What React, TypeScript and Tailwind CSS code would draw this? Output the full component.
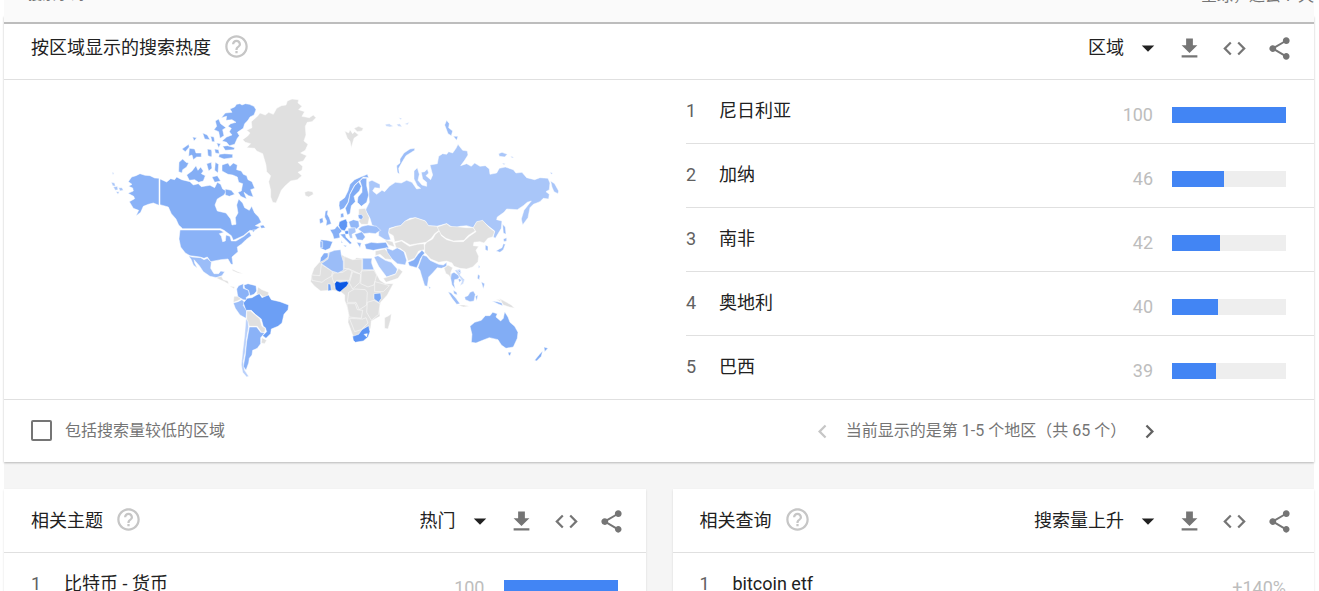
import { useState } from 'react';
import {
  MdArrowDropDown,
  MdChevronLeft,
  MdChevronRight,
  MdCode,
  MdGetApp,
  MdHelpOutline,
  MdShare,
} from 'react-icons/md';

interface Region {
  name: string;
  value: number;
}

interface Sheet {
  transform: string;
  shapes: [string, string][];
}

const regions: Region[] = [
  { name: '尼日利亚', value: 100 },
  { name: '加纳', value: 46 },
  { name: '南非', value: 42 },
  { name: '奥地利', value: 40 },
  { name: '巴西', value: 39 },
];

const NONE = '#e0e0e0';

// Map is split in four sheets, each one is a list of [fill, path]
const sheets: Sheet[] = [
  {
    // Alaska, Canada, Greenland
    transform: 'translate(100 85) scale(0.3333)',
    shapes: [
      ['#8ab2f7', 'M85 290L95 276L108 272L120 266L135 271L150 272L164 279L177 280V361L160 354L145 358L130 364L122 382L108 393L116 376L100 370L88 350L104 341L101 334L84 325L100 318L98 309L86 304L96 298Z'],
      ['#a9c6f9', 'M34 292L44 294L46 304L38 302ZM40 306L52 304L54 314L46 316ZM56 308L66 308L70 316L60 318ZM48 320L58 320L54 328ZM36 262L42 264L39 269Z'],
      ['#84aef5', 'M180 282L200 291L212 281L224 284L230 276L245 284L270 290L280 300L295 296L304 305L330 301L344 308L352 292L362 298L368 312L380 318L372 330L352 342L345 360L352 378L378 384L392 402L396 420L408 418L406 398L414 384L410 360L416 342L428 354L434 368L448 376L455 364L464 384L476 396L484 412L466 422L480 426L462 438L450 436L430 452L400 466L394 452L372 436L362 431H248L236 420L228 402L214 386L205 366L180 359Z'],
      ['#84aef5', 'M237 232L248 222L258 232L266 234L260 246L248 254L246 264L236 260Z'],
      ['#84aef5', 'M260 270L276 258L288 242L294 256L302 246L310 258L304 266L316 272L310 288L296 292L284 284L268 286Z'],
      ['#84aef5', 'M366 240L384 234L390 244L400 234L412 240L410 254L424 258L430 268L440 272L444 284L456 290L464 310L452 314L460 336L446 332L432 322L440 342L422 334L414 322L424 318L428 296L416 292L412 276L398 270L384 268L366 258Z'],
      ['#84aef5', 'M320 236L334 232L336 250L326 258ZM346 232L356 238L354 264L344 256ZM336 276L352 272L362 288L344 292ZM376 312L394 316L404 328L388 334L376 330ZM326 206L336 196L336 216ZM358 208L374 206L398 208L398 218L372 222L356 216Z'],
      ['#84aef5', 'M468 74L462 64L448 58L436 56L426 60L420 56L410 58L404 66L390 72L396 82L376 84L364 98L380 94L378 106L396 104L408 112L392 116L384 124L394 130L388 140L396 150L380 156L366 168L380 172L388 182L404 178L412 160L418 152L412 142L430 130L434 116L444 106L450 96L462 90Z'],
      ['#84aef5', 'M346 108L356 102L362 116L378 128L368 134L372 152L360 160L356 140L342 134L350 124ZM350 174L362 176L356 188ZM368 184L382 182L404 188L402 194L376 196Z'],
      ['#84aef5', 'M308 144L322 150L330 164L314 162ZM332 154L342 156L344 170L336 170ZM278 156L290 158L282 168ZM246 192L266 178L268 186L256 200ZM268 190L284 192L288 204L304 204L304 216L290 216L280 224L276 210L266 214ZM322 192L334 194L334 216L324 212ZM344 192L356 194L358 206L346 204Z'],
      [NONE, 'M428 164L444 152L450 144L440 136L456 128L454 110L474 92L480 84L496 90L506 82L520 88L530 70L544 62L558 60L562 48L576 42L596 44L594 54L606 64L596 74L614 80L606 94L628 98L640 90L648 98L636 110L622 112L616 124L618 150L612 168L624 178L616 196L602 204L620 212L610 228L594 232L608 244L606 256L594 262L606 272L592 284L572 288L556 302L544 316L536 336L528 354L518 352L512 336L512 316L506 290L512 272L500 260L498 240L488 206L470 198L464 190L440 188L452 176L436 172Z'],
      [NONE, 'M614 322L624 318L638 320L640 328L626 336L616 332Z'],
    ],
  },
  {
    // Northern Europe and Russia
    transform: 'translate(300 85) scale(0.3333)',
    shapes: [
      [NONE, 'M134 138L146 144L150 134L158 146L164 140L176 150L162 160L158 174L154 188L150 168L142 160ZM162 130L176 124L190 130L186 138L172 140Z'],
      ['#a9c6f9', 'M207 310L206 290L216 286L240 298L240 310L224 308L218 318L230 328L246 316L254 320L268 304L286 292L304 294L320 286L336 292L350 312L362 310L352 302L342 282L342 258L352 248L358 268L354 286L366 300L380 304L380 292L368 282L364 262L374 260L382 252L386 264L378 272L392 284L398 270L390 240L412 236L416 214L428 206L440 208L446 200L458 204L468 190L474 178L488 196L502 198L504 210L494 226L482 242L500 236L514 244L524 234L540 244L556 242L568 252L570 268L590 264L598 250L616 246L640 254L648 264L666 262L680 278L704 284L720 278L744 280L750 294L748 314L738 320L748 328L746 342L730 340L720 350L700 358L690 368L684 398L668 420L664 402L672 376L694 348L682 352L670 362L652 374L620 372L612 382L592 396L590 404L606 408L604 430L586 460L580 456L584 438L566 424L548 408L530 412L520 428L500 422L480 424L462 430L440 416L410 424L384 422L376 408L346 398L330 400L316 408L302 422L290 424L268 430L266 446L272 464L258 466L236 452L236 432L216 420L210 400L196 376L208 352L206 330Z'],
      ['#a9c6f9', 'M752 288L764 296L776 318L774 326L762 320L756 306ZM750 262L758 264L754 268ZM596 206L606 202L622 208L614 216L598 214ZM632 214L642 217L636 219ZM606 234L616 236L612 239Z'],
      ['#9bbdf8', 'M344 190L330 192L312 204L300 222L300 234L290 242L292 262L298 268L296 250L306 232L318 212L344 196Z'],
      ['#9bbdf8', 'M434 120L440 106L448 116L446 128L458 138L454 152L444 146L438 130ZM460 154L474 154L470 166Z'],
      ['#c9dbfb', 'M256 118L268 116L280 124L270 126L258 124ZM290 118L300 116L306 126L294 124ZM296 98L306 100L302 104ZM314 116L328 112L322 120Z'],
      ['#86aff6', 'M117 362L118 350L134 338L144 318L150 298L164 284L182 276L202 268L206 278L190 276L178 288L164 300L150 326L144 352L132 370L120 376Z'],
      ['#7fabf5', 'M136 370L146 350L150 328L164 302L176 290L184 304L178 318L162 334L166 350L154 362L150 386L142 390Z'],
      ['#86aff6', 'M180 288L188 280L200 280L200 302L206 330L200 352L184 364L172 352L174 336L186 322L186 306Z'],
      ['#86aff6', 'M76 378L84 376L82 388L88 398L94 416L78 422L80 408L74 396ZM58 402L68 398L70 412L60 416ZM122 386L130 384L132 396L122 398Z'],
      [NONE, 'M176 372L196 370L200 382L208 398L204 418L184 418L176 408L184 398L176 390Z'],
      ['#86aff6', 'M174 390L184 388L190 396L184 404L176 400Z'],
      ['#5e95f4', 'M118 410L128 406L138 402L142 412L142 424L134 438L122 434L116 422Z'],
      ['#90b6f7', 'M146 410L160 404L176 408L178 424L170 432L152 428Z'],
    ],
  },
  {
    // United States and Latin America
    transform: 'translate(100 215) scale(0.3333)',
    shapes: [
      ['#8ab2f7', 'M240 45H360L372 52L358 56L364 64L368 80L376 78L378 60L390 64L394 78L408 78L432 64L448 50L454 62L438 74L424 88L412 96L414 110L396 126L399 148L393 148L384 132L362 134L342 138L332 140L322 126L312 130L300 126L270 122L256 114L242 96L237 72Z'],
      ['#84aef5', 'M480 32L490 30L496 38L484 40ZM456 46L466 44L460 52Z'],
      ['#9bbdf8', 'M266 122L276 126L302 128L312 134L322 130L334 142L332 160L342 176L356 176L362 168L374 170L366 182L350 188L330 184L310 170L298 152L282 134L284 144L292 160L280 150L274 134Z'],
      [NONE, 'M348 188L364 184L370 194L384 198L386 208L374 200L360 194ZM388 212L404 216L402 221ZM396 162L414 170L430 176L414 174L398 167Z'],
      ['#8ab2f7', 'M410 222L416 212L430 206L430 220L446 226L448 240L438 248L442 256L430 254L414 246L412 236Z'],
      ['#7fabf5', 'M432 210L444 206L468 212L470 228L462 238L450 242L446 226L434 220Z'],
      [NONE, 'M474 216L486 224L506 232L504 244L490 246L480 238L470 238Z'],
      [NONE, 'M402 244L412 244L424 252L412 258L400 262Z'],
      ['#9bbdf8', 'M400 264L414 260L426 254L434 262L430 272L440 286L438 310L420 300L406 280Z'],
      ['#6c9ff5', 'M430 264L442 250L456 248L470 240L478 236L486 248L500 242L506 240L514 254L540 260L566 270L564 284L552 298L546 324L534 334L514 342L512 356L498 370L488 362L500 350L496 338L490 334L484 312L466 298L454 286L438 286Z'],
      [NONE, 'M440 288L452 288L466 300L480 312L486 334L496 340L494 352L484 352L472 334L448 334L440 314Z'],
      ['#b9d0fa', 'M438 310L444 320L446 336L440 370L436 410L430 440L434 466L446 484L440 486L428 472L424 450L428 410L434 360Z'],
      ['#8ab2f7', 'M448 336L470 336L482 352L494 354L482 368L482 386L472 400L458 406L456 420L448 430L446 444L438 466L430 454L436 420L440 380Z'],
      [NONE, 'M486 368L500 376L494 386L484 384Z'],
    ],
  },
  {
    // Africa, southern Europe, Asia, Oceania
    transform: 'translate(300 215) scale(0.3333)',
    shapes: [
      [NONE, 'M56 144L42 160L34 182L32 200L44 214L62 228L98 226L122 230L134 240L134 256L142 278L146 300L144 322L160 366L212 340L214 318L240 304L238 280L242 262L262 240L280 206L256 206L240 196L228 174L216 150L216 130L186 130L170 128L160 136L130 122L110 110L86 112Z'],
      [NONE, 'M132 124L158 134L186 132L186 168L178 176L148 162L132 160Z'],
      [NONE, 'M34 180L60 182L64 148L98 170L94 184L76 194L66 202L36 196Z'],
      [NONE, 'M96 186L100 174L128 172L144 162L156 168L148 196L110 196L102 204Z'],
      [NONE, 'M158 170L182 178L180 202L158 222L148 204Z'],
      [NONE, 'M184 168L222 166L230 180L222 210L204 216L182 206Z'],
      [NONE, 'M146 232L164 222L196 224L202 232L200 270L178 284L168 262L142 262Z'],
      [NONE, 'M140 266L166 266L172 284L188 286L184 310L148 306Z'],
      [NONE, 'M148 310L188 312L198 308L204 324L184 344L164 350Z'],
      [NONE, 'M202 262L222 256L240 266L236 298L214 316L200 292Z'],
      [NONE, 'M224 200L240 204L268 212L250 230L224 230Z'],
      [NONE, 'M254 308L266 302L274 296L272 314L264 342L254 340Z'],
      ['#86aff6', 'M60 142L62 128L72 114L84 114L84 126L72 136Z'],
      ['#9bbdf8', 'M84 132L88 112L104 106L122 104L124 120L130 140L130 166L114 174L96 168L64 146Z'],
      ['#9bbdf8', 'M188 130L216 130L214 142L222 164L188 164Z'],
      ['#0b57e3', 'M104 206L110 198L120 202L140 199L146 204L140 214L130 222L120 231L112 228L106 222Z'],
      ['#6c9ff5', 'M84 206L92 208L94 226L84 228Z'],
      ['#78a7f5', 'M222 236L242 234L244 250L236 262L222 252Z'],
      ['#5e95f4', 'M158 364L176 358L186 344L206 332L210 350L204 366L190 378L166 382L160 376Z'],
      ['#ffffff', 'M192 358L202 356L200 366Z'],
      ['#86aff6', 'M90 44L104 42L112 32L126 48L118 56L120 68L102 72L98 58Z'],
      ['#7fabf5', 'M62 74L80 76L98 80L90 100L76 106L62 100Z'],
      ['#9bbdf8', 'M60 78L68 80L68 98L60 98Z'],
      ['#86aff6', 'M120 58L136 56L138 66L156 84L150 88L130 68ZM130 90L140 92L136 96ZM124 76L128 84L124 84Z'],
      ['#5e95f4', 'M134 48L152 46L152 56L136 58Z'],
      ['#a9c6f9', 'M144 40L166 38L168 52L156 58L158 70L150 70L146 58Z'],
      ['#90b6f7', 'M164 58L186 50L196 66L188 76L172 74ZM170 82L184 84L180 98Z'],
      ['#9bbdf8', 'M174 42L186 34L204 30L230 34L242 46L226 56L208 54L192 56Z'],
      ['#86aff6', 'M194 88L214 82L232 84L258 82L266 98L240 102L220 106L198 102Z'],
      [NONE, 'M254 74L278 80L284 96L266 90ZM226 108L254 102L266 112L276 134L256 132L240 118L226 122Z'],
      ['#a9c6f9', 'M222 126L234 122L256 136L274 142L292 162L288 176L260 186L248 170L236 154Z'],
      [NONE, 'M250 190L286 178L296 160L308 170L294 190L258 202Z'],
      ['#a0c0f9', 'M258 98L278 106L292 98L312 110L320 136L316 150L292 146L276 132L262 112Z'],
      [NONE, 'M268 42L290 34L302 32L316 18L346 8L376 18L386 32L412 34L420 44L404 56L394 70L378 82L352 86L330 90L306 76L284 80L280 62L266 54Z'],
      [NONE, 'M284 84L304 78L328 94L352 88L372 86L374 104L356 108L344 130L324 138L316 112L300 100L288 98Z'],
      [NONE, 'M412 36L440 26L450 34L480 36L500 38L520 38L526 48L504 62L492 76L460 78L438 70L422 58Z'],
      [NONE, 'M418 48L424 62L440 74L462 80L490 80L508 64L528 50L520 38L530 20L548 16L566 36L584 50L578 66L564 70L552 84L540 80L522 82L520 92L536 94L528 106L536 124L534 140L518 156L500 162L480 160L462 154L456 144L440 138L416 142L392 132L374 112L374 90L380 82L398 72L406 58Z'],
      ['#86aff6', 'M324 142L342 134L354 118L366 106L374 114L362 130L356 146L350 158L328 152Z'],
      ['#9bbdf8', 'M354 158L362 136L368 120L380 124L390 136L416 148L430 150L440 142L440 154L424 160L412 158L398 174L386 186L382 214L374 212L364 180L360 166Z'],
      [NONE, 'M432 160L444 150L458 158L452 174L456 196L446 180L438 176Z'],
      ['#9bbdf8', 'M454 176L462 172L478 182L476 192L464 194L462 206L466 222L456 210L452 190ZM474 190L486 194L478 202Z'],
      ['#c9dbfb', 'M464 166L480 162L484 172L480 180L494 194L490 206L480 212L486 198L474 180Z'],
      ['#9bbdf8', 'M444 230L454 234L468 250L480 266L470 268L456 250ZM460 226L470 232L472 240L462 236ZM494 246L504 242L510 232L520 228L526 238L522 258L510 260L496 254ZM526 244L534 240L530 258ZM576 258L592 260L606 264L608 272L596 268ZM386 214L392 218L388 222Z'],
      [NONE, 'M474 270L492 270L508 274L490 276ZM598 250L620 262L634 270L644 280L628 276L610 270ZM588 252L604 256L600 260Z'],
      ['#9bbdf8', 'M534 178L540 182L538 194L532 190ZM544 200L554 206L550 222ZM536 150L540 156L536 160Z'],
      ['#9bbdf8', 'M556 90L564 94L564 108L556 104ZM588 108L598 102L606 98L610 86L616 88L610 104L600 112ZM610 72L620 68L620 78L612 80ZM608 28L616 36L618 58L610 54ZM472 166L482 166L480 174Z'],
      ['#82adf5', 'M510 334L524 322L544 316L556 302L570 302L578 292L592 296L588 306L602 318L610 310L614 290L624 306L630 322L644 334L654 352L652 370L640 396L618 400L604 390L594 374L568 368L548 376L528 384L514 382L516 358Z'],
      ['#82adf5', 'M624 412L634 412L630 422L626 420ZM732 396L744 400L734 410ZM704 436L720 416L728 408L724 424L710 438Z'],
    ],
  },
];

function WorldMap() {
  return (
    <svg viewBox="97 80 470 319" role="img" aria-label="世界地图" className="w-[470px] max-w-full">
      {sheets.map(sheet => (
        <g key={sheet.transform} transform={sheet.transform} stroke="#fff" strokeWidth="1.5" strokeLinejoin="round">
          {sheet.shapes.map(([fill, d]) => (
            <path key={d} fill={fill} d={d} />
          ))}
        </g>
      ))}
    </svg>
  );
}

interface CardHeaderProps {
  id: string;
  title: string;
  options: string[];
}

function CardHeader({ id, title, options }: CardHeaderProps) {
  return (
    <header className="flex h-16 items-center border-b border-[#e0e0e0] pr-3 pl-[27px]">
      <h2 id={id} className="text-[18px] leading-6 text-[#212121]">{title}</h2>
      <button type="button" aria-label="帮助" className="mb-0.5 ml-3 text-[#c6c6c6]">
        <MdHelpOutline size={27} />
      </button>
      <div className="relative ml-auto flex items-center text-[#212121]">
        <select
          aria-labelledby={id}
          className="field-sizing-content h-8 appearance-none bg-transparent pr-[43px] text-[18px] leading-6"
        >
          {options.map(option => (
            <option key={option}>{option}</option>
          ))}
        </select>
        <MdArrowDropDown size={30} className="pointer-events-none absolute right-1" />
      </div>
      <div className="flex pt-0.5 text-[#757575]">
        <button type="button" aria-label="下载" className="flex w-[45px] justify-center">
          <MdGetApp size={27} />
        </button>
        <button type="button" aria-label="嵌入" className="flex w-[45px] justify-center">
          <MdCode size={27} />
        </button>
        <button type="button" aria-label="分享" className="flex w-[45px] justify-center">
          <MdShare size={27} />
        </button>
      </div>
    </header>
  );
}

interface RowProps {
  rank: number;
  name: string;
  value: string;
  percent?: number;
}

function Row({ rank, name, value, percent }: RowProps) {
  return (
    <div className="flex h-full items-center pr-7 pb-0.5 text-[18px] leading-6">
      <span className="w-[33px] text-[#616161]">{rank}</span>
      <span className="text-[#212121]">{name}</span>
      <div className="ml-auto flex items-center pt-2">
        <span className="text-[#bdbdbd]">{value}</span>
        {percent !== undefined && (
          <div className="ml-[19px] h-4 w-[114px] bg-[#eeeeee]">
            <div className="h-full bg-[#4285f4]" style={{ width: `${percent}%` }} />
          </div>
        )}
      </div>
    </div>
  );
}

export default function App() {
  const [lowVolume, setLowVolume] = useState(false);

  return (
    <div className="h-screen overflow-hidden bg-white pr-[5px] pl-1 font-[Roboto,'Noto_Sans_CJK_SC',sans-serif]">
      {/* Compact search term bar */}
      <div className="relative z-10 flex h-6 items-start justify-between overflow-hidden border-b-2 border-[#bdbdbd] bg-[#fafafa] text-[14px] leading-5 text-[#757575]">
        <div className="-mt-4 flex items-center">
          <span className="mr-3 size-3 rounded-full bg-[#4285f4]" />
          <span>搜索字词</span>
        </div>
        <span className="-mt-3.5 text-[16px] whitespace-nowrap">全球，过去 7 天</span>
      </div>

      <main className="-mt-2 bg-[#f5f5f5]">
        <section className="bg-white shadow-[0_1px_2px_rgba(0,0,0,0.25)]">
          <CardHeader id="regions-title" title="按区域显示的搜索热度" options={['区域', '城市']} />
          <div className="grid grid-cols-2 border-b border-[#e0e0e0]">
            <div className="flex items-center justify-center">
              <WorldMap />
            </div>
            <ol className="pl-[27px]">
              {regions.map((region, index) => (
                <li key={region.name} className="h-16 border-b border-[#e0e0e0] last:h-[63px] last:border-b-0">
                  <Row rank={index + 1} name={region.name} value={String(region.value)} percent={region.value} />
                </li>
              ))}
            </ol>
          </div>
          <footer className="grid h-[62px] grid-cols-2 items-center text-[16px] leading-6 text-[#757575]">
            <label className="flex items-center pl-[27px]">
              <input
                type="checkbox"
                checked={lowVolume}
                onChange={e => setLowVolume(e.target.checked)}
                className="mr-[13px] mb-0.5 size-[21px] appearance-none rounded-xs border-2 border-[#757575] checked:bg-[#757575]"
              />
              包括搜索量较低的区域
            </label>
            <div className="flex items-center justify-center pl-[27px] pr-7">
              <button type="button" aria-label="上一页" disabled className="mr-2.5 text-[#c6c6c6]">
                <MdChevronLeft size={27} />
              </button>
              <span>当前显示的是第 1-5 个地区（共 65 个）</span>
              <button type="button" aria-label="下一页" className="ml-2.5 text-[#616161]">
                <MdChevronRight size={27} />
              </button>
            </div>
          </footer>
        </section>

        <div className="mt-[27px] grid grid-cols-2 gap-[27px]">
          <section className="bg-white shadow-[0_1px_2px_rgba(0,0,0,0.12)]">
            <CardHeader id="topics-title" title="相关主题" options={['热门', '搜索量上升']} />
            <div className="h-16 pl-[27px]">
              <Row rank={1} name="比特币 - 货币" value="100" percent={100} />
            </div>
          </section>
          <section className="bg-white shadow-[0_1px_2px_rgba(0,0,0,0.12)]">
            <CardHeader id="queries-title" title="相关查询" options={['搜索量上升', '热门']} />
            <div className="h-16 pl-[27px]">
              <Row rank={1} name="bitcoin etf" value="+140%" />
            </div>
          </section>
        </div>
      </main>
    </div>
  );
}
